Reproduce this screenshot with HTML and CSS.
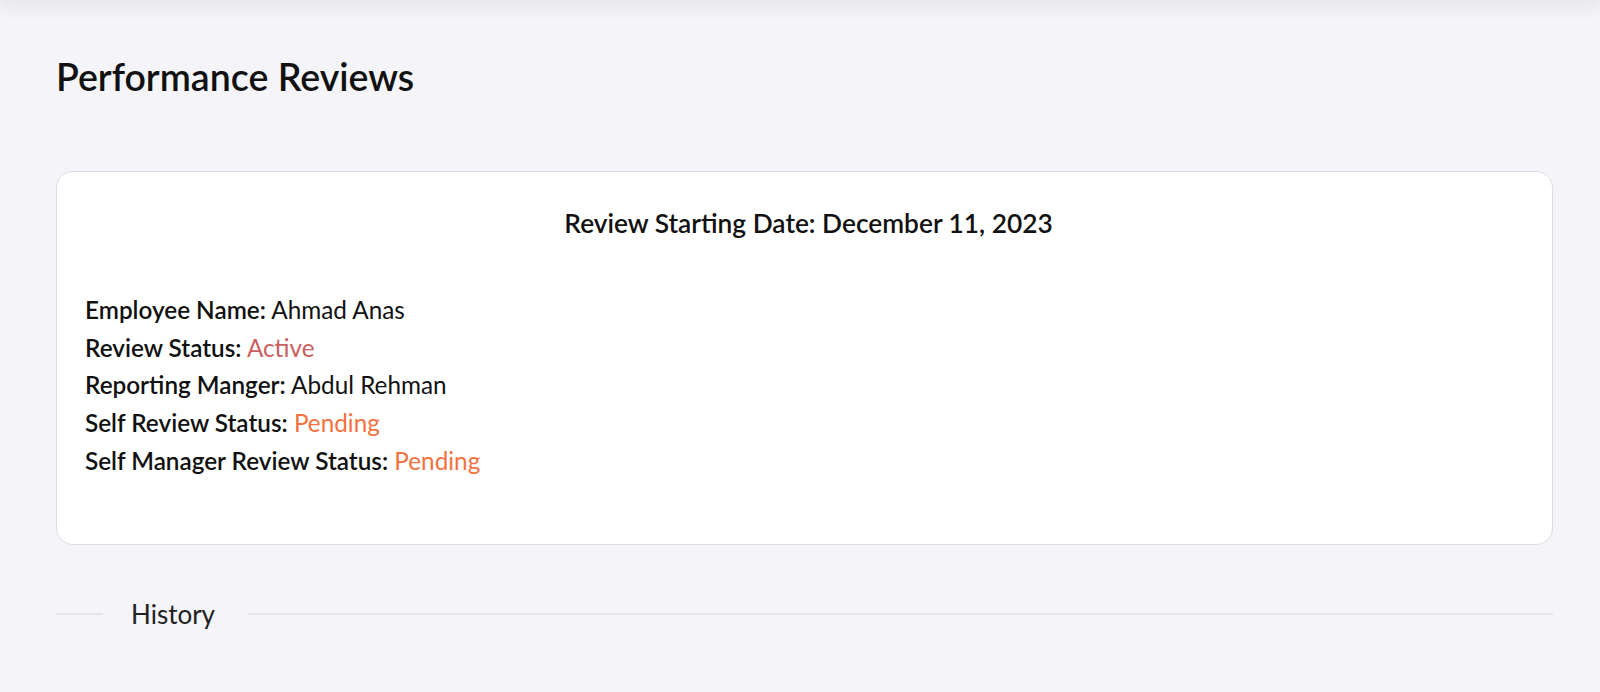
FILE: index.html
```html
<!DOCTYPE html>
<html lang="en">
<head>
<meta charset="utf-8">
<title>Performance Reviews</title>
<link rel="stylesheet" href="styles.css">
</head>
<body>
<div class="topbar"></div>
<main class="page">
  <h1 class="page-title">Performance Reviews</h1>
  <section class="card">
    <h2 class="card-title">Review Starting Date: December 11, 2023</h2>
    <ul class="details">
      <li><span class="label">Employee Name:</span> <span class="value">Ahmad Anas</span></li>
      <li><span class="label">Review Status:</span> <span class="value active">Active</span></li>
      <li><span class="label">Reporting Manger:</span> <span class="value">Abdul Rehman</span></li>
      <li><span class="label">Self Review Status:</span> <span class="value pending">Pending</span></li>
      <li><span class="label">Self Manager Review Status:</span> <span class="value pending">Pending</span></li>
    </ul>
  </section>
  <div class="divider">
    <span class="divider-line short"></span>
    <span class="divider-text">History</span>
    <span class="divider-line long"></span>
  </div>
</main>
</body>
</html>
```

FILE: styles.css
```css
* { box-sizing: border-box; }
html, body { margin: 0; padding: 0; }
body {
  background: #f4f4f9;
  font-family: Lato, "Open Sans", sans-serif;
  color: #111;
  height: 692px;
  overflow: hidden;
}
.topbar {
  height: 0;
  box-shadow: 0 0 18px 4px rgba(0, 0, 0, 0.12);
}
.page {
  padding: 51px 47px 0 56px;
}
.page-title {
  margin: 0;
  font-size: 37.5px;
  font-weight: 600;
  line-height: 52px;
  color: #111;
}
.card {
  margin-top: 68px;
  background: #fff;
  border: 1px solid #dcdce2;
  border-radius: 17px;
  height: 374px;
  padding: 33px 28px 0 36px;
}
.card-title {
  margin: 0;
  text-align: center;
  font-size: 26.3px;
  font-weight: 600;
  line-height: 36px;
}
.details {
  list-style: none;
  margin: 50px 0 0 -8px;
  padding: 0;
}
.details li {
  font-size: 24.3px;
  line-height: 37.7px;
}
.label { font-weight: 600; }
.value { font-weight: 400; }
.active { color: #c95f5f; }
.pending { color: #f4713f; }
.divider {
  display: flex;
  align-items: center;
  margin-top: 53px;
}
.divider-line {
  height: 2px;
  background: #e4e4ea;
}
.divider-line.short { width: 47px; }
.divider-line.long { flex: 1; }
.divider-text {
  padding: 0 33px 0 28px;
  font-size: 26px;
  font-weight: 400;
  color: #222;
  line-height: 32px;
}
```
